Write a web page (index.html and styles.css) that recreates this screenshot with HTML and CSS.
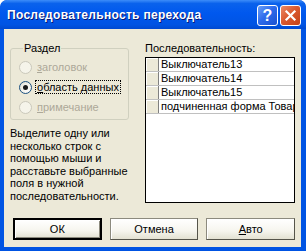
FILE: index.html
```html
<!DOCTYPE html>
<html lang="ru">
<head>
  <meta charset="UTF-8">
  <title>Последовательность перехода</title>
  <link rel="stylesheet" href="styles.css">
</head>
<body>
  <div class="window">
    <div class="titlebar">
      <div class="title">Последовательность перехода</div>
      <div class="title-buttons">
        <div class="tbtn help">?</div>
        <div class="tbtn close">
          <svg width="13" height="13" viewBox="0 0 13 13">
            <path d="M2.5 2.5 L10.5 10.5 M10.5 2.5 L2.5 10.5" stroke="#fff" stroke-width="2.2" stroke-linecap="square"/>
          </svg>
        </div>
      </div>
    </div>
    <div class="client">
      <div class="columns">
        <div class="left-col">
          <fieldset class="group">
            <legend>Раздел</legend>
            <div class="radio disabled"><span class="dot"></span><span class="lbl"><u>з</u>аголовок</span></div>
            <div class="radio checked"><span class="dot"></span><span class="lbl focus"><u>о</u>бласть данных</span></div>
            <div class="radio disabled"><span class="dot"></span><span class="lbl"><u>п</u>римечание</span></div>
          </fieldset>
          <p class="hint">Выделите одну или<br>несколько строк с<br>помощью мыши и<br>расставьте выбранные<br>поля в нужной<br>последовательности.</p>
        </div>
        <div class="right-col">
          <div class="list-label">Последовательность:</div>
          <div class="listbox">
            <div class="row"><span class="sel"></span><span class="cell">Выключатель13</span></div>
            <div class="row"><span class="sel"></span><span class="cell">Выключатель14</span></div>
            <div class="row"><span class="sel"></span><span class="cell">Выключатель15</span></div>
            <div class="row"><span class="sel"></span><span class="cell">подчиненная форма Товары</span></div>
          </div>
        </div>
      </div>
      <div class="buttons">
        <button class="btn default">ОК</button>
        <button class="btn">Отмена</button>
        <button class="btn"><u>А</u>вто</button>
      </div>
    </div>
  </div>
</body>
</html>
```

FILE: styles.css
```css
body {
  margin: 0;
  padding: 0;
  background: #fff;
  font-family: "Liberation Sans", Arial, sans-serif;
  font-size: 11px;
}

.window {
  width: 306px;
  height: 251px;
  box-sizing: border-box;
  background: #0054e3;
  border-radius: 7px 7px 0 0;
  padding: 0 5px 4px 4px;
  display: flex;
  flex-direction: column;
  overflow: hidden;
}

.titlebar {
  height: 29px;
  flex: none;
  display: flex;
  align-items: center;
  justify-content: space-between;
  margin: 0 -5px 0 -4px;
  padding: 0 5px 0 7px;
  border-radius: 7px 7px 0 0;
  background: linear-gradient(to bottom, #3d8df9 0%, #0a62ec 12%, #0058ee 45%, #0054e3 85%, #0049d0 100%);
}

.title {
  color: #fff;
  font-weight: bold;
  font-size: 12px;
  letter-spacing: 0.3px;
  text-shadow: 1px 1px 0 #0a1874;
  margin-top: 1px;
}

.title-buttons {
  display: flex;
  gap: 2px;
  margin-top: 2px;
}

.tbtn {
  width: 21px;
  height: 21px;
  box-sizing: border-box;
  border: 1px solid #fff;
  border-radius: 3px;
  display: flex;
  align-items: center;
  justify-content: center;
}

.help {
  background: linear-gradient(135deg, #6a9ff7 0%, #2f6cec 45%, #1a50d0 100%);
  color: #fff;
  font-weight: bold;
  font-size: 16px;
}

.close {
  background: linear-gradient(135deg, #eb8a66 0%, #db5a30 45%, #c44216 100%);
}

.client {
  flex: 1;
  background: #ece9d8;
  display: flex;
  flex-direction: column;
  padding: 0 6px 7px 5px;
  color: #000;
}

.columns {
  height: 189px;
  display: flex;
  gap: 16px;
}

.left-col {
  width: 120px;
  padding-top: 13px;
  padding-left: 1px;
}

.group {
  margin: 0;
  padding: 2px 0 2px 8px;
  border: 1px solid #d0d0bf;
  border-radius: 3px;
  min-width: 0;
}

.group legend {
  padding: 0 1px;
  margin-left: 4px;
  line-height: 13px;
}

.radio {
  display: flex;
  align-items: center;
  height: 20px;
  white-space: nowrap;
}

.radio .dot {
  width: 11px;
  height: 11px;
  flex: none;
  border: 1px solid #1c5180;
  border-radius: 50%;
  background: radial-gradient(circle at 65% 65%, #fff 0%, #f0efe8 55%, #d4d2c6 100%);
  margin-right: 4px;
  position: relative;
}

.radio.disabled {
  color: #aca899;
}

.radio.disabled .dot {
  border-color: #cac8bb;
  background: #f5f4ea;
}

.radio.checked .dot::after {
  content: "";
  position: absolute;
  left: 3px;
  top: 3px;
  width: 5px;
  height: 5px;
  border-radius: 50%;
  background: #1a1a1a;
}

.lbl {
  padding: 0 1px;
  line-height: 12px;
}

.lbl.focus {
  outline: 1px dotted #000;
}

.hint {
  margin: 7px 0 0 0;
  line-height: 12.6px;
  white-space: nowrap;
}

.right-col {
  width: 150px;
  padding-top: 13px;
}

.list-label {
  height: 13px;
  line-height: 13px;
  margin-bottom: 2px;
}

.listbox {
  height: 146px;
  box-sizing: border-box;
  border: 1px solid #000;
  background: #fff;
  overflow: hidden;
}

.row {
  display: flex;
  height: 13px;
  border-bottom: 1px solid #c0c0c0;
}

.sel {
  width: 12px;
  flex: none;
  background: #ece9d8;
  border-right: 1px solid #808080;
  box-shadow: inset 1px 1px 0 #fff;
}

.cell {
  padding-left: 2px;
  white-space: nowrap;
  line-height: 13px;
}

.buttons {
  display: flex;
  gap: 8px;
  padding-left: 4px;
}

.btn {
  width: 91px;
  height: 22px;
  font-family: "Liberation Sans", Arial, sans-serif;
  font-size: 11px;
  color: #000;
  background: linear-gradient(to bottom, #fff 0%, #f6f5ee 60%, #e3e1d2 100%);
  border: 1px solid #8c8a7e;
  border-right-color: #55544a;
  border-bottom-color: #55544a;
  box-shadow: inset 1px 1px 0 #fff;
  padding: 0;
}

.btn.default {
  border: 2px solid #000;
  box-shadow: inset 1px 1px 0 #fff, inset -1px -1px 0 #8c8a7e;
}
```
